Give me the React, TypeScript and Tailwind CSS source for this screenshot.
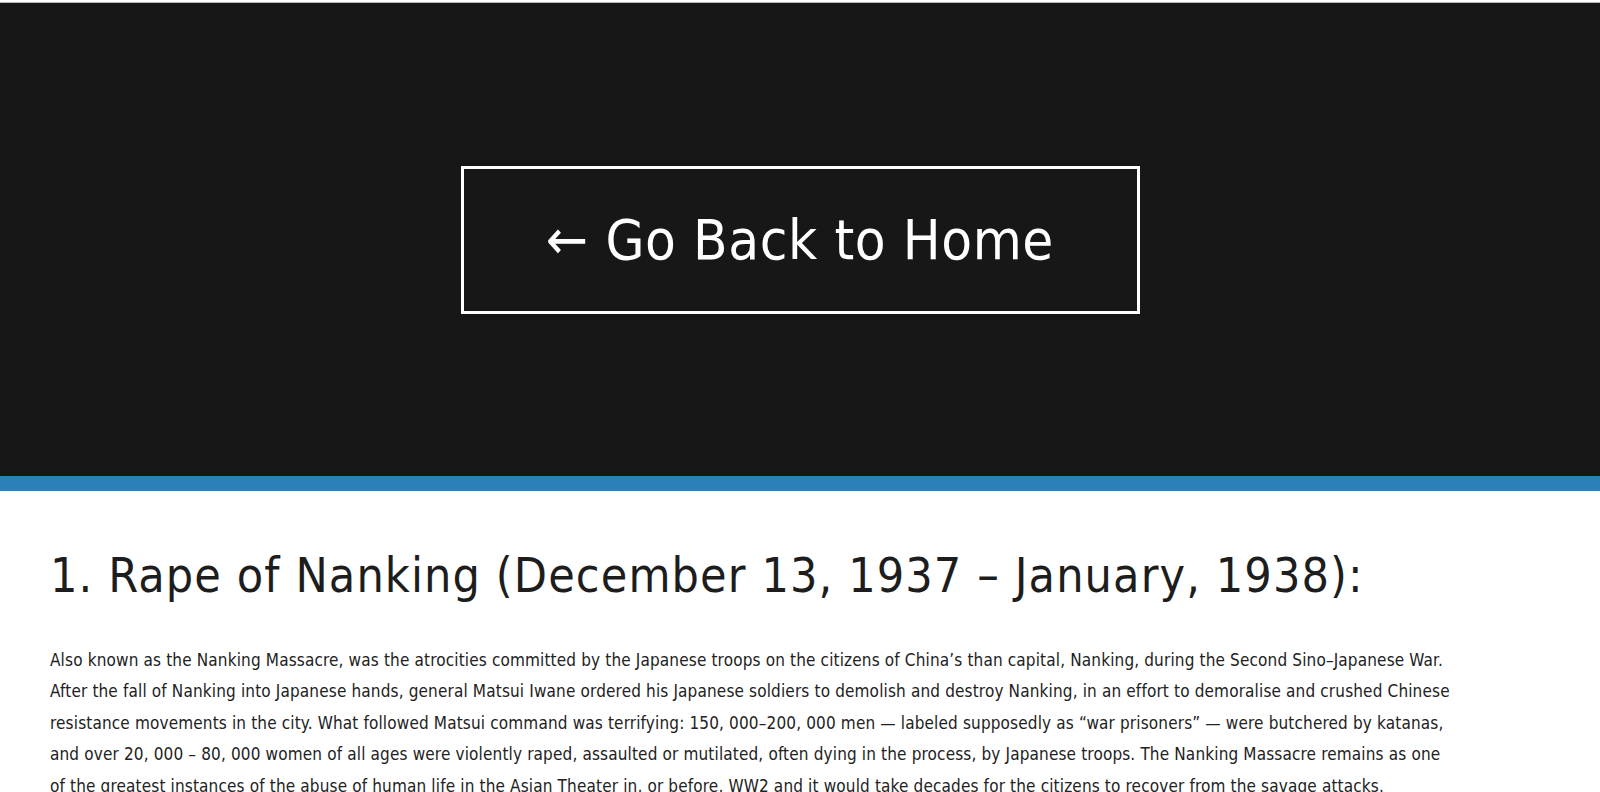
import React from 'react';

const font = { fontFamily: '"DejaVu Sans Condensed", "DejaVu Sans", sans-serif', fontStretch: 'condensed' } as React.CSSProperties;

const App: React.FC = () => {
  return (
    <div className="w-full min-h-screen bg-white" style={font}>
      {/* header */}
      <div className="pt-[2px] bg-white">
        <div className="h-px bg-[#b8b8b8]" />
        <div className="bg-[#171717] h-[473px] flex items-center justify-center">
          <a
            href="#"
            className="w-[679px] h-[148px] border-[3px] border-white flex items-center justify-center text-white text-[56px] leading-none tracking-[0.6px]"
          >
            ← Go Back to Home
          </a>
        </div>
        <div className="h-[15px] bg-[#2b80b9]" />
      </div>

      {/* article */}
      <div className="px-[50px] pt-[56px]">
        <h1 className="text-[48px] leading-[56px] text-[#1d1d1d] tracking-[1.1px]">
          1. Rape of Nanking (December 13, 1937 – January, 1938):
        </h1>
        <p className="mt-[42px] text-[17px] leading-[31.4px] text-[#222] tracking-[0.15px] max-w-[1405px]">
          Also known as the Nanking Massacre, was the atrocities committed by the Japanese troops on the citizens of China’s than capital, Nanking, during the Second Sino–Japanese War. After the fall of Nanking into Japanese hands, general Matsui Iwane ordered his Japanese soldiers to demolish and destroy Nanking, in an effort to demoralise and crushed Chinese resistance movements in the city. What followed Matsui command was terrifying: 150, 000–200, 000 men — labeled supposedly as “war prisoners” — were butchered by katanas, and over 20, 000 – 80, 000 women of all ages were violently raped, assaulted or mutilated, often dying in the process, by Japanese troops. The Nanking Massacre remains as one of the greatest instances of the abuse of human life in the Asian Theater in, or before, WW2 and it would take decades for the citizens to recover from the savage attacks.
        </p>
      </div>
    </div>
  );
};

export default App;
